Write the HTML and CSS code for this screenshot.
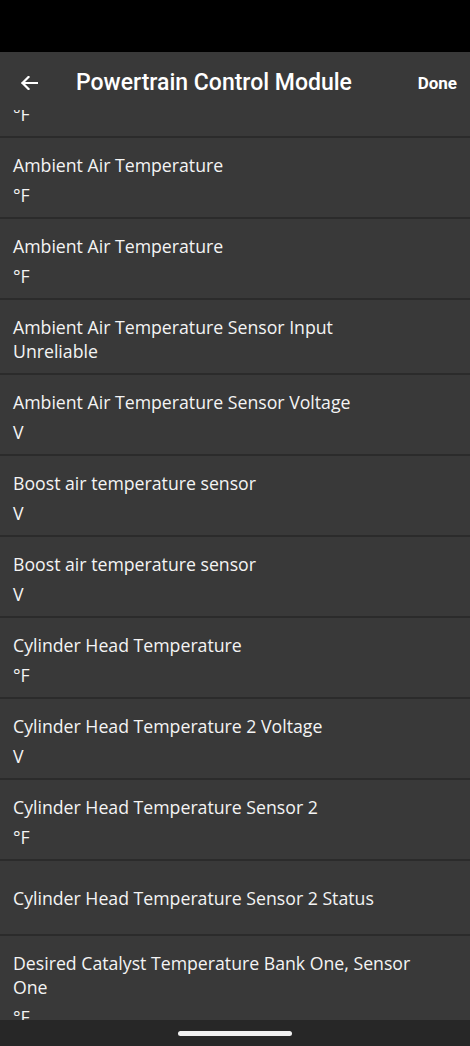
FILE: index.html
```html
<!DOCTYPE html>
<html lang="en">
<head>
    <meta charset="UTF-8">
    <meta name="viewport" content="width=device-width, initial-scale=1.0">
    <title>Powertrain Control Module</title>
    <link rel="stylesheet" href="styles.css">
</head>
<body>

    <div class="status-bar"></div>

    <div class="screen">
        <div class="app-bar">
            <button class="back-button" aria-label="Back">
                <svg width="18" height="14" viewBox="0 0 18 14">
                    <path d="M17 7H2.5M8.5 1L2.5 7l6 6" fill="none" stroke="#fff" stroke-width="2.2" stroke-linecap="square"/>
                </svg>
            </button>
            <h1 class="title">Powertrain Control Module</h1>
            <button class="done-button">Done</button>
        </div>

        <div class="list-viewport">
            <ul class="pid-list">
                <li class="pid-item">
                    <div class="pid-name">Ambient Air Temperature</div>
                    <div class="pid-unit">°F</div>
                </li>
                <li class="pid-item">
                    <div class="pid-name">Ambient Air Temperature</div>
                    <div class="pid-unit">°F</div>
                </li>
                <li class="pid-item">
                    <div class="pid-name">Ambient Air Temperature</div>
                    <div class="pid-unit">°F</div>
                </li>
                <li class="pid-item">
                    <div class="pid-name">Ambient Air Temperature Sensor Input Unreliable</div>
                </li>
                <li class="pid-item">
                    <div class="pid-name">Ambient Air Temperature Sensor Voltage</div>
                    <div class="pid-unit">V</div>
                </li>
                <li class="pid-item">
                    <div class="pid-name">Boost air temperature sensor</div>
                    <div class="pid-unit">V</div>
                </li>
                <li class="pid-item">
                    <div class="pid-name">Boost air temperature sensor</div>
                    <div class="pid-unit">V</div>
                </li>
                <li class="pid-item">
                    <div class="pid-name">Cylinder Head Temperature</div>
                    <div class="pid-unit">°F</div>
                </li>
                <li class="pid-item">
                    <div class="pid-name">Cylinder Head Temperature 2 Voltage</div>
                    <div class="pid-unit">V</div>
                </li>
                <li class="pid-item">
                    <div class="pid-name">Cylinder Head Temperature Sensor 2</div>
                    <div class="pid-unit">°F</div>
                </li>
                <li class="pid-item single">
                    <div class="pid-name">Cylinder Head Temperature Sensor 2 Status</div>
                </li>
                <li class="pid-item">
                    <div class="pid-name">Desired Catalyst Temperature Bank One, Sensor One</div>
                    <div class="pid-unit">°F</div>
                </li>
            </ul>
        </div>
    </div>

    <div class="nav-bar">
        <div class="nav-handle"></div>
    </div>

</body>
</html>
```

FILE: styles.css
```css
* {
    box-sizing: border-box;
}
body {
    margin: 0;
    width: 470px;
    height: 1046px;
    overflow: hidden;
    background-color: #393939;
    color: #f4f4f4;
    font-family: "Open Sans", sans-serif;
}
.status-bar {
    height: 52px;
    background-color: #000;
}
.screen {
    height: 968px;
    display: flex;
    flex-direction: column;
}
.app-bar {
    height: 58px;
    flex-shrink: 0;
    padding-top: 4px;
    display: flex;
    align-items: center;
    background-color: #393939;
}
.back-button {
    width: 58px;
    height: 54px;
    padding: 0;
    border: none;
    background: none;
    display: flex;
    align-items: center;
    justify-content: center;
}
.title {
    flex: 1;
    margin: 0 0 0 18px;
    font-family: Roboto, sans-serif;
    font-size: 23px;
    line-height: 28px;
    font-weight: 500;
    color: #fff;
}
.done-button {
    border: none;
    background: none;
    padding: 0 13px 0 0;
    font-family: Roboto, sans-serif;
    font-size: 17px;
    font-weight: 700;
    color: #fff;
}
/* list is scrolled, so the first row sits partly under the app bar */
.list-viewport {
    flex: 1;
    overflow: hidden;
}
.pid-list {
    list-style: none;
    margin: -53px 0 0;
    padding: 0;
}
.pid-item {
    padding: 15px 13px 10px;
    border-bottom: 2px solid #2b2b2b;
}
.pid-item.single {
    min-height: 75px;
    display: flex;
    flex-direction: column;
    justify-content: center;
    padding-top: 10px;
}
.pid-name {
    max-width: 402px;
    font-size: 17.7px;
    line-height: 24px;
}
.pid-unit {
    margin-top: 6px;
    font-size: 17.7px;
    line-height: 24px;
}
.nav-bar {
    position: absolute;
    left: 0;
    right: 0;
    bottom: 0;
    height: 26px;
    background-color: #272727;
    display: flex;
    justify-content: center;
    padding-top: 11px;
}
.nav-handle {
    width: 114px;
    height: 5px;
    border-radius: 3px;
    background-color: #f0f0f0;
}
```
